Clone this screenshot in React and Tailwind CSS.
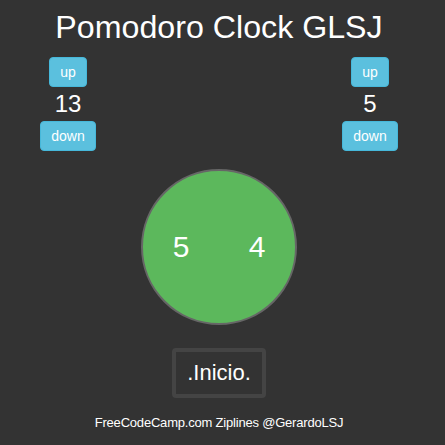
import { useState } from 'react';

function Counter({ value, onUp, onDown }) {
  return (
    <div className="flex flex-col items-center w-[54px]">
      <button
        onClick={onUp}
        className="h-[30px] px-[10px] rounded-[4px] border border-[#46b8da] bg-[#5bc0de] text-white text-[14px] leading-[18px]"
      >
        up
      </button>
      <div className="h-[34px] text-[24px] leading-[34px] text-white">{value}</div>
      <button
        onClick={onDown}
        className="h-[30px] px-[10px] rounded-[4px] border border-[#46b8da] bg-[#5bc0de] text-white text-[14px] leading-[18px]"
      >
        down
      </button>
    </div>
  );
}

export default function App() {
  const [work, setWork] = useState(13);
  const [rest, setRest] = useState(5);

  return (
    <div className="w-[445px] h-[445px] bg-[#333333] font-['Liberation_Sans',Arial,sans-serif]">
      <div className="w-[438px] flex flex-col items-center">
        <h1 className="pt-[10px] text-[32.2px] leading-[35px] text-white">Pomodoro Clock GLSJ</h1>

        <div className="w-full flex justify-between px-[41px] mt-[12px]">
          <Counter value={work} onUp={() => setWork(work + 1)} onDown={() => setWork(Math.max(1, work - 1))} />
          <Counter value={rest} onUp={() => setRest(rest + 1)} onDown={() => setRest(Math.max(1, rest - 1))} />
        </div>

        <div className="mt-[18px] w-[156px] h-[156px] rounded-full border-2 border-[#666666] bg-[#5cb85c] flex items-center justify-center gap-[42px] text-white text-[30px] leading-none">
          <span className="w-[34px] text-center">5</span>
          <span className="w-[34px] text-center">4</span>
        </div>

        <button className="mt-[23px] w-[94px] h-[50px] rounded-[4px] border-4 border-[#444444] text-white text-[22px] leading-[26px]">
          .Inicio.
        </button>

        <p className="mt-[15px] text-white text-[13px] leading-[20px] tracking-[-0.2px]">FreeCodeCamp.com Ziplines @GerardoLSJ</p>
      </div>
    </div>
  );
}
